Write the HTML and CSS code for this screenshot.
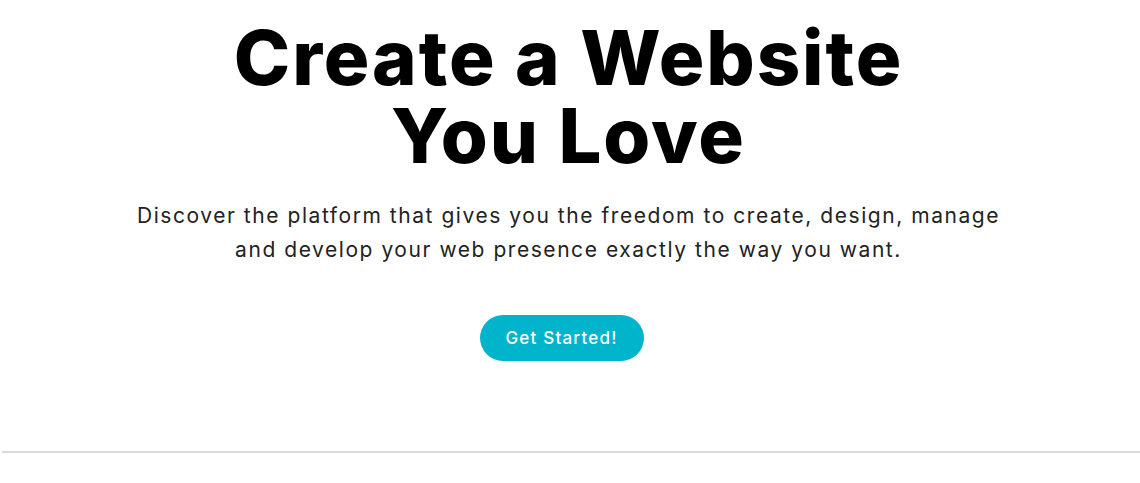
FILE: index.html
```html
<!DOCTYPE html>
<html lang="en">
<head>
  <meta charset="UTF-8" />
  <meta name="viewport" content="width=device-width, initial-scale=1.0"/>
  <title>Create a Website You Love</title>
  <link rel="stylesheet" href="styles.css">
</head>
<body>
  <section class="hero">
    <h1>Create a Website<br>You Love</h1>
    <p class="lead">Discover the platform that gives you the freedom to create, design, manage<br>and develop your web presence exactly the way you want.</p>
    <a class="cta" href="#">Get Started!</a>
  </section>
  <hr class="divider">
</body>
</html>
```

FILE: styles.css
```css
body {
  margin: 0;
  font-family: 'Inter', 'Noto Sans', sans-serif;
  background-color: #fff;
  color: #222;
}
.hero {
  display: flex;
  flex-direction: column;
  align-items: center;
  text-align: center;
  padding: 18px 0 0 0;
  margin-right: 3px;
  height: 437px;
  box-sizing: border-box;
}
h1 {
  margin: 0;
  font-size: 76px;
  line-height: 78px;
  font-weight: 800;
  color: #000;
  letter-spacing: 1.9px;
}
.lead {
  margin: 25px 0 0 0;
  font-size: 21px;
  line-height: 34px;
  font-weight: 400;
  color: #222;
  letter-spacing: 1.55px;
}
.cta {
  margin: 48px 14px 0 0;
  display: inline-flex;
  align-items: center;
  justify-content: center;
  width: 164px;
  height: 46px;
  border-radius: 23px;
  background-color: #00b5cb;
  color: #fff;
  text-decoration: none;
  font-size: 17px;
  font-weight: 500;
  letter-spacing: 1.2px;
}
.divider {
  margin: 14px 0 0 2px;
  border: none;
  height: 2px;
  background-color: #dadada;
}
```
